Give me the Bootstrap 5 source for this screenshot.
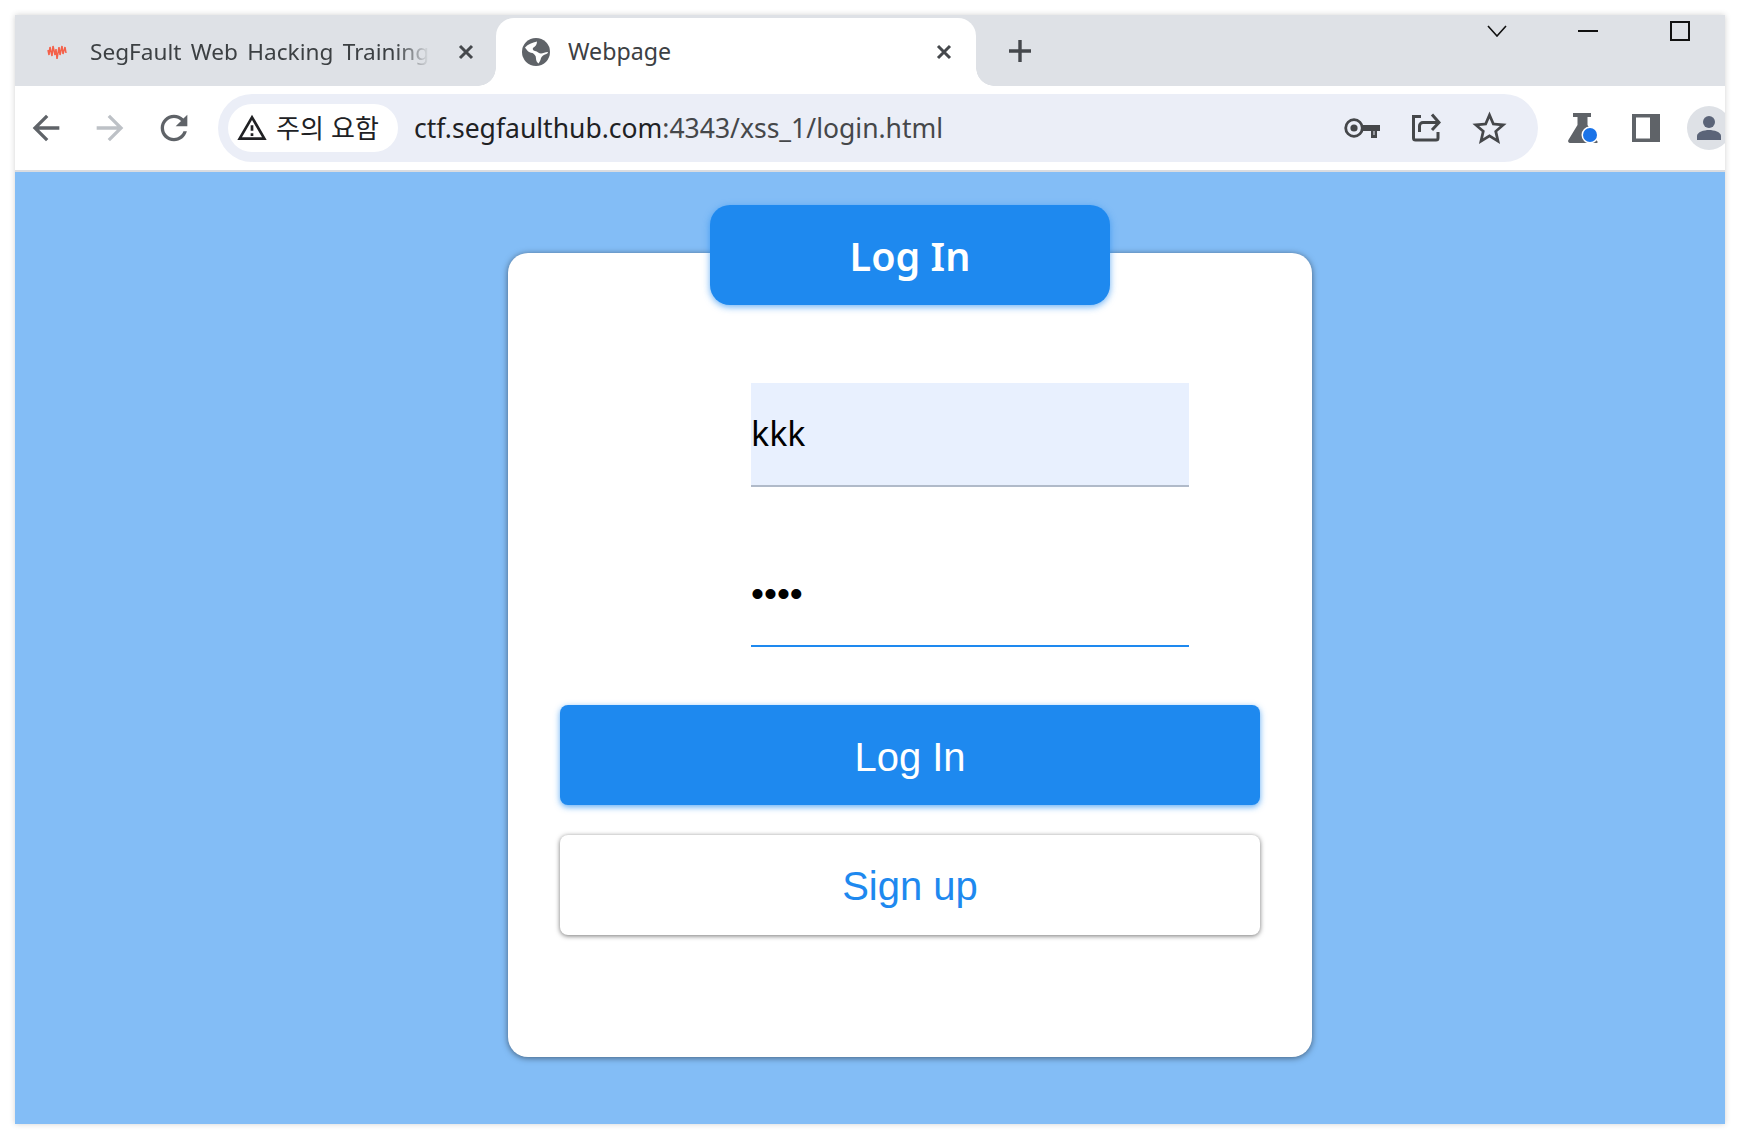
<!DOCTYPE html><html lang="ko">
<head>
  <meta charset="UTF-8">
  <meta name="viewport" content="width=device-width, initial-scale=1.0">
  <title>Webpage</title>
  <link href="https://cdn.jsdelivr.net/npm/bootstrap@5.3.0/dist/css/bootstrap.min.css" rel="stylesheet">
  <style>
    html, body { background-color: #fff; }
    body { font-family: "Noto Sans", "Noto Sans CJK KR", sans-serif; overflow: hidden; height: 1140px; }
    .browser-win { margin: 15px 15px 16px 15px; width: 1710px; height: 1109px; box-shadow: 0 0 6px rgba(0,0,0,.18); overflow: hidden; }

    .tab-strip { height: 71px; background-color: #dee1e6; padding-top: 3px; }
    .tab-item { width: 481px; height: 68px; color: #3c4043; font-size: 22.6px; position: relative; }
    .tab-item.tab-on { width: 480px; background-color: #fff; border-radius: 18px 18px 0 0; font-size: 23.2px; }
    .tab-item.tab-on::before, .tab-item.tab-on::after { content: ""; position: absolute; bottom: 0; width: 18px; height: 18px; }
    .tab-item.tab-on::before { left: -18px; background: radial-gradient(circle at 0 0, transparent 17.5px, #fff 18px); }
    .tab-item.tab-on::after { right: -18px; background: radial-gradient(circle at 100% 0, transparent 17.5px, #fff 18px); }
    .tab-first { padding-left: 32px; }
    .tab-on { padding-left: 26px; }
    .tab-name { margin-left: 23px; white-space: nowrap; overflow: hidden; width: 340px; word-spacing: 3.5px; -webkit-mask-image: linear-gradient(to right, #000 90%, transparent 100%); mask-image: linear-gradient(to right, #000 90%, transparent 100%); }
    .tab-on .tab-name { margin-left: 18px; margin-bottom: 2px; width: 368px; word-spacing: 0; -webkit-mask-image: none; mask-image: none; }
    .tab-x { margin-left: 28px; }
    .tab-on .tab-x { margin-left: 0; }
    .tab-plus { margin-left: 32px; margin-top: 0; margin-bottom: 2px; }
    .win-ctrls { margin-left: auto; align-self: flex-start; margin-top: 3px; padding-right: 35px; }
    .win-chev { margin-right: 71px; }
    .win-min { margin-right: 72px; }

    .tool-bar { height: 86px; background-color: #fff; border-bottom: 2px solid #dadce0; padding-left: 11px; gap: 24px; overflow: hidden; }
    .omni-box { width: 1320px; height: 68px; flex: none; background-color: #ebeef7; border-radius: 34px; padding-left: 10px; }
    .warn-chip { width: 170px; height: 48px; background-color: #fff; border-radius: 24px; padding-left: 8px; gap: 8px; color: #202124; font-family: "Noto Sans CJK KR", sans-serif; font-size: 26px; white-space: nowrap; }
    .warn-chip span { margin-top: -4px; }
    .url-text { margin-left: 16px; padding-top: 2px; font-size: 26.5px; color: #202124; white-space: nowrap; }
    .url-tail { color: #45474a; }
    .omni-icons { margin-left: auto; padding-right: 28px; gap: 28px; }
    .key-icon { margin-right: 3px; }
    .tool-right { gap: 34px; margin-left: 6px; }
    .avatar-dot { width: 44px; height: 44px; flex: none; margin-left: -7px; }

    .page-area { height: 952px; background-color: #83bdf6; padding-top: 81px; padding-left: 493px; }
    .login-card.card { width: 804px; height: 804px; border: 0; border-radius: 20px; background-color: #fff; box-shadow: 0 1px 6px rgba(0,0,0,.5); padding: 0 52px; }
    .login-head { width: 400px; height: 100px; margin: -48px auto 0; background-color: #1e89ef; color: #fff; border-radius: 20px; font-size: 39.5px; font-weight: 600; box-shadow: 0 2px 7px rgba(30,137,239,.65); }
    .login-head span { margin-top: 3px; }
    .login-field.form-control { width: 438px; height: 104px; margin-left: 191px; border: 0; border-bottom: 2px solid #b0bac9; border-radius: 0; background-color: transparent; box-shadow: none; padding: 0; color: #000; font-family: "Noto Sans", sans-serif; font-size: 34px; }
    .login-field.field-auto { margin-top: 78px; background-color: #e8f0fe; padding-bottom: 2px; }
    .login-field.field-pass { margin-top: 56px; border-bottom-color: #1e89ef; font-family: "Liberation Sans", sans-serif; font-size: 37px; }
    .login-btn.btn { display: block; width: 700px; height: 100px; border-radius: 8px; font-family: "Liberation Sans", sans-serif; font-size: 40px; padding: 4px 0 0; }
    .btn-go.btn { margin-top: 58px; background-color: #1e89ef; border: 0; color: #fff; box-shadow: 0 2px 6px rgba(30,137,239,.7); }
    .btn-sign.btn { margin-top: 30px; padding-top: 2px; background-color: #fff; border: 0; color: #1e89ef; box-shadow: 0 1px 5px rgba(0,0,0,.55); }
    svg { display: block; flex: none; }
  </style>
</head>
<body>
  <div class="browser-win">
    <div class="tab-strip d-flex align-items-stretch">
      <div class="tab-item tab-first d-flex align-items-center">
        <svg width="20" height="18" viewBox="0 0 20 18"><path d="M1 7 2 12 3 4 5 13 6 3 8 12 9 6 10 16 12 4 13 12 15 3 16 11 18 4 19 10" fill="none" stroke="#f4614a" stroke-width="1.5"/></svg>
        <div class="tab-name">SegFault Web Hacking Training</div>
        <svg class="tab-x" width="16" height="16" viewBox="0 0 16 16"><path d="M2 2 14 14M14 2 2 14" stroke="#45484c" stroke-width="3"/></svg>
      </div>
      <div class="tab-item tab-on d-flex align-items-center">
        <svg width="28" height="28" viewBox="0 0 28 28"><circle cx="14" cy="14" r="14" fill="#5f6368"/><path d="M3 9.500C6 6 10 5 15 3.500c0 3-1.500 5-3.500 6-1.500 1-.5 3 1.500 3.500 2.500.5 4 2.500 6 2.500s4-1.500 7-1.500c0 1-1 2-3 2.500-1.500.5-3 1.500-4 3.500-.5 2-1 3.500-2.500 5.500-1.500-1-2.500-3-2.500-5 0-3-1.500-4-3.500-5.500C6 14.500 5 12 3 9.500z" fill="#fff"/></svg>
        <div class="tab-name">Webpage</div>
        <svg class="tab-x" width="16" height="16" viewBox="0 0 16 16"><path d="M2 2 14 14M14 2 2 14" stroke="#45484c" stroke-width="3"/></svg>
      </div>
      <svg class="tab-plus align-self-center" width="24" height="24" viewBox="0 0 24 24"><path d="M12 1V23M1 12H23" stroke="#45484c" stroke-width="3.4"/></svg>
      <div class="win-ctrls d-flex align-items-center">
        <svg class="win-chev" width="20" height="12" viewBox="0 0 20 12"><path d="M1 1 10 11 19 1" fill="none" stroke="#111" stroke-width="1.6"/></svg>
        <svg class="win-min" width="20" height="2" viewBox="0 0 20 2"><path d="M0 1H20" stroke="#111" stroke-width="2"/></svg>
        <svg width="20" height="20" viewBox="0 0 20 20"><rect x="1" y="1" width="18" height="18" fill="none" stroke="#111" stroke-width="2"/></svg>
      </div>
    </div>

    <div class="tool-bar d-flex align-items-center">
      <svg width="40" height="40" viewBox="0 0 24 24"><path d="M20 11H7.83l5.59-5.59L12 4l-8 8 8 8 1.41-1.41L7.83 13H20z" fill="#5f6368"/></svg>
      <svg width="40" height="40" viewBox="0 0 24 24"><path d="M4 11h12.17l-5.59-5.59L12 4l8 8-8 8-1.41-1.41L16.17 13H4z" fill="#bdc1c6"/></svg>
      <svg width="40" height="40" viewBox="0 0 24 24"><path d="M17.65 6.35C16.2 4.9 14.21 4 12 4c-4.42 0-7.99 3.58-7.99 8s3.57 8 7.99 8c3.73 0 6.84-2.55 7.73-6h-2.08c-.82 2.33-3.04 4-5.65 4-3.31 0-6-2.69-6-6s2.69-6 6-6c1.66 0 3.14.69 4.22 1.78L13 11h7V4l-2.35 2.35z" fill="#5f6368"/></svg>
      <div class="omni-box d-flex align-items-center">
        <div class="warn-chip d-flex align-items-center">
          <svg width="32" height="32" viewBox="0 0 24 24"><path d="M12 5.99L19.53 19H4.47L12 5.99M12 2L1 21h22L12 2zm1 14h-2v2h2v-2zm0-6h-2v4h2v-4z" fill="#202124"/></svg>
          <span>주의 요함</span>
        </div>
        <div class="url-text">ctf.segfaulthub.com<span class="url-tail">:4343/xss_1/login.html</span></div>
        <div class="omni-icons d-flex align-items-center">
          <svg class="key-icon" width="36" height="20" viewBox="0 0 36 20"><circle cx="10" cy="10" r="8.300" fill="none" stroke="#45474a" stroke-width="2.800"/><circle cx="10" cy="10" r="3.600" fill="#45474a"/><path d="M18 7H36V13H33V20H27V13H18z" fill="#45474a"/><path d="M29.500 13V17H30.500V13z" fill="#ebeef7"/></svg>
          <svg width="30" height="30" viewBox="0 0 30 30"><path d="M10 3.500H2.500V25a2 2 0 0 0 2 2H25a2 2 0 0 0 2-2V19" fill="none" stroke="#45474a" stroke-width="3"/><path d="M8.500 19V13a3.500 3.500 0 0 1 3.500-3.500H27" fill="none" stroke="#45474a" stroke-width="3"/><path d="M21 1.500 28 9.500 21 17" fill="none" stroke="#45474a" stroke-width="3"/></svg>
          <svg width="41" height="41" viewBox="0 0 24 24"><path d="M22 9.24l-7.19-.62L12 2 9.19 8.63 2 9.24l5.46 4.73L5.82 21 12 17.27 18.18 21l-1.63-7.03L22 9.24zM12 15.4l-3.76 2.27 1-4.28-3.32-2.88 4.38-.38L12 6.1l1.71 4.04 4.38.38-3.32 2.88 1 4.28L12 15.4z" fill="#45474a"/></svg>
        </div>
      </div>
      <div class="tool-right d-flex align-items-center">
        <svg width="30" height="30" viewBox="0 0 30 30"><path d="M5 0H23V4H19.500V12L29 28a1 1 0 0 1-1 2H2a2 2 0 0 1-1.600-3L9.500 12V4H5z" fill="#5f6368"/><circle cx="22" cy="22" r="8.500" fill="#fff"/><circle cx="22" cy="22" r="7" fill="#1a73e8"/></svg>
        <svg width="28" height="28" viewBox="0 0 28 28"><rect width="28" height="28" fill="#5f6368"/><rect x="4" y="3.500" width="14" height="21" fill="#fff"/></svg>
        <svg class="avatar-dot" viewBox="0 0 44 44"><circle cx="22" cy="22" r="22" fill="#dee1e6"/><circle cx="22" cy="16" r="6" fill="#5b6478"/><path d="M10 34V30c0-4 7-6 12-6s12 2 12 6v4z" fill="#5b6478"/></svg>
      </div>
    </div>

    <div class="page-area">
      <form class="login-card card">
        <div class="login-head d-flex align-items-center justify-content-center"><span>Log In</span></div>
        <input class="login-field field-auto form-control" type="text" value="kkk" aria-label="id">
        <input class="login-field field-pass form-control" type="password" value="aaaa" aria-label="password">
        <button type="button" class="login-btn btn-go btn">Log In</button>
        <button type="button" class="login-btn btn-sign btn">Sign up</button>
      </form>
    </div>
  </div>
  <script src="https://cdn.jsdelivr.net/npm/bootstrap@5.3.0/dist/js/bootstrap.bundle.min.js"></script>
</body>
</html>
